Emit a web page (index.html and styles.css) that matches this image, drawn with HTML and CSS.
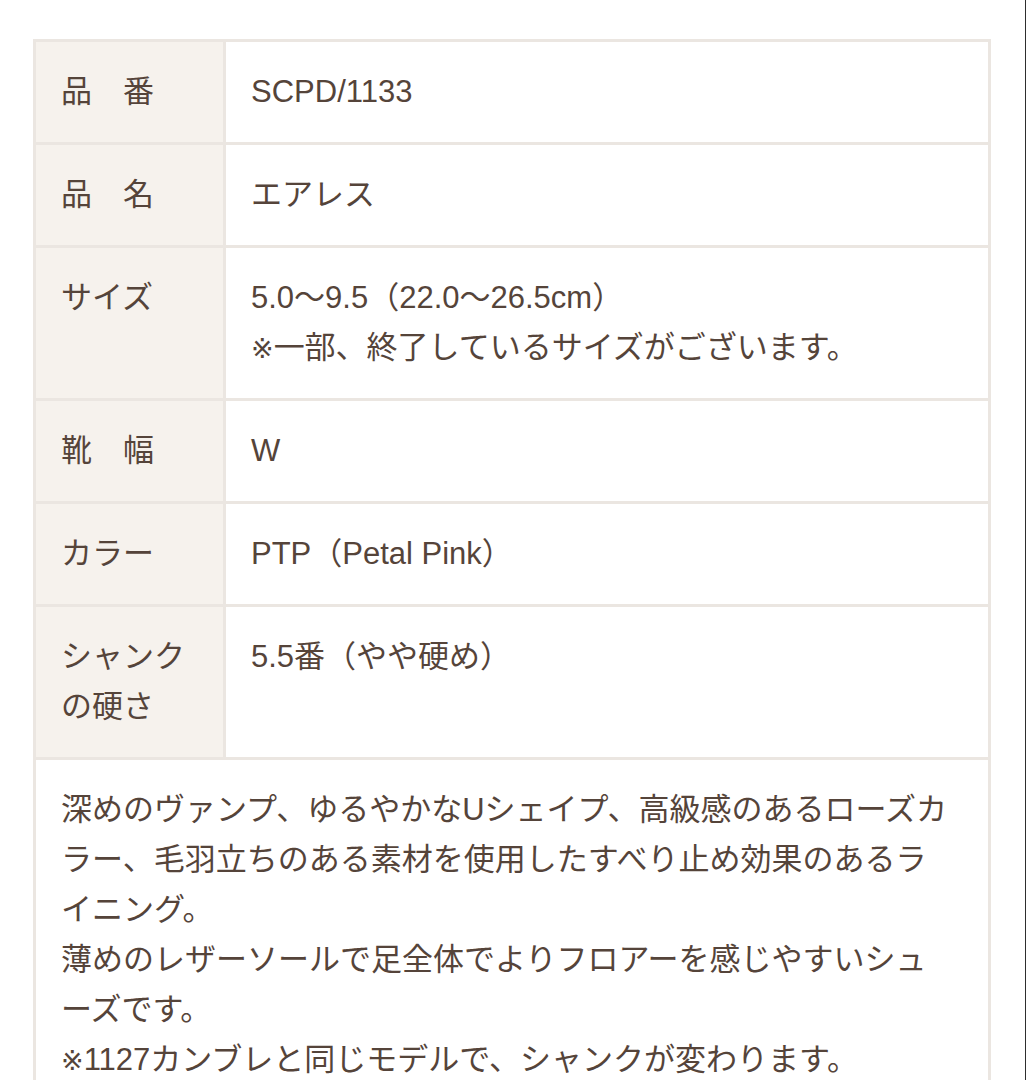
FILE: index.html
```html
<!DOCTYPE html>
<html lang="ja">
<head>
<meta charset="utf-8">
<title>エアレス</title>
<link rel="stylesheet" href="styles.css">
</head>
<body>
<div class="page">
  <div class="spec">
    <div class="row">
      <div class="label">品　番</div>
      <div class="value">SCPD/1133</div>
    </div>
    <div class="row">
      <div class="label">品　名</div>
      <div class="value">エアレス</div>
    </div>
    <div class="row">
      <div class="label">サイズ</div>
      <div class="value">5.0〜9.5（22.0〜26.5cm）<br><span class="mark">※</span>一部、終了しているサイズがございます。</div>
    </div>
    <div class="row">
      <div class="label">靴　幅</div>
      <div class="value">W</div>
    </div>
    <div class="row">
      <div class="label">カラー</div>
      <div class="value">PTP（Petal Pink）</div>
    </div>
    <div class="row">
      <div class="label">シャンクの硬さ</div>
      <div class="value">5.5番（やや硬め）</div>
    </div>
    <div class="desc">深めのヴァンプ、ゆるやかなUシェイプ、高級感のあるローズカラー、毛羽立ちのある素材を使用したすべり止め効果のあるライニング。<br>薄めのレザーソールで足全体でよりフロアーを感じやすいシューズです。<br><span class="mark">※</span>1127カンブレと同じモデルで、シャンクが変わります。</div>
  </div>
</div>
</body>
</html>
```
FILE: styles.css
```css
html, body {
  margin: 0;
  padding: 0;
  background: #ffffff;
}
body {
  font-family: "Liberation Sans", "Noto Sans CJK JP", sans-serif;
  color: #55443a;
  font-size: 31px;
  line-height: 50px;
}
.page {
  box-sizing: border-box;
  width: 1026px;
  height: 1080px;
  overflow: hidden;
  padding: 39px 0 0 33px;
  border-right: 1px solid #2e2e2e;
}
.spec {
  box-sizing: border-box;
  width: 958px;
  border: 3px solid #ebe6e1;
  border-bottom: none;
}
.row {
  display: flex;
  border-bottom: 3px solid #ebe6e1;
}
.label {
  box-sizing: border-box;
  width: 190px;
  flex: none;
  padding: 25px;
  background: #f6f2ed;
  border-right: 3px solid #ebe6e1;
}
.value {
  flex: 1;
  padding: 25px;
}
.desc {
  padding: 25px 31px 25px 25px;
}
.mark {
  font-family: "DejaVu Sans", "Noto Sans CJK JP", sans-serif;
  font-size: 27px;
  line-height: 1;
}
```
